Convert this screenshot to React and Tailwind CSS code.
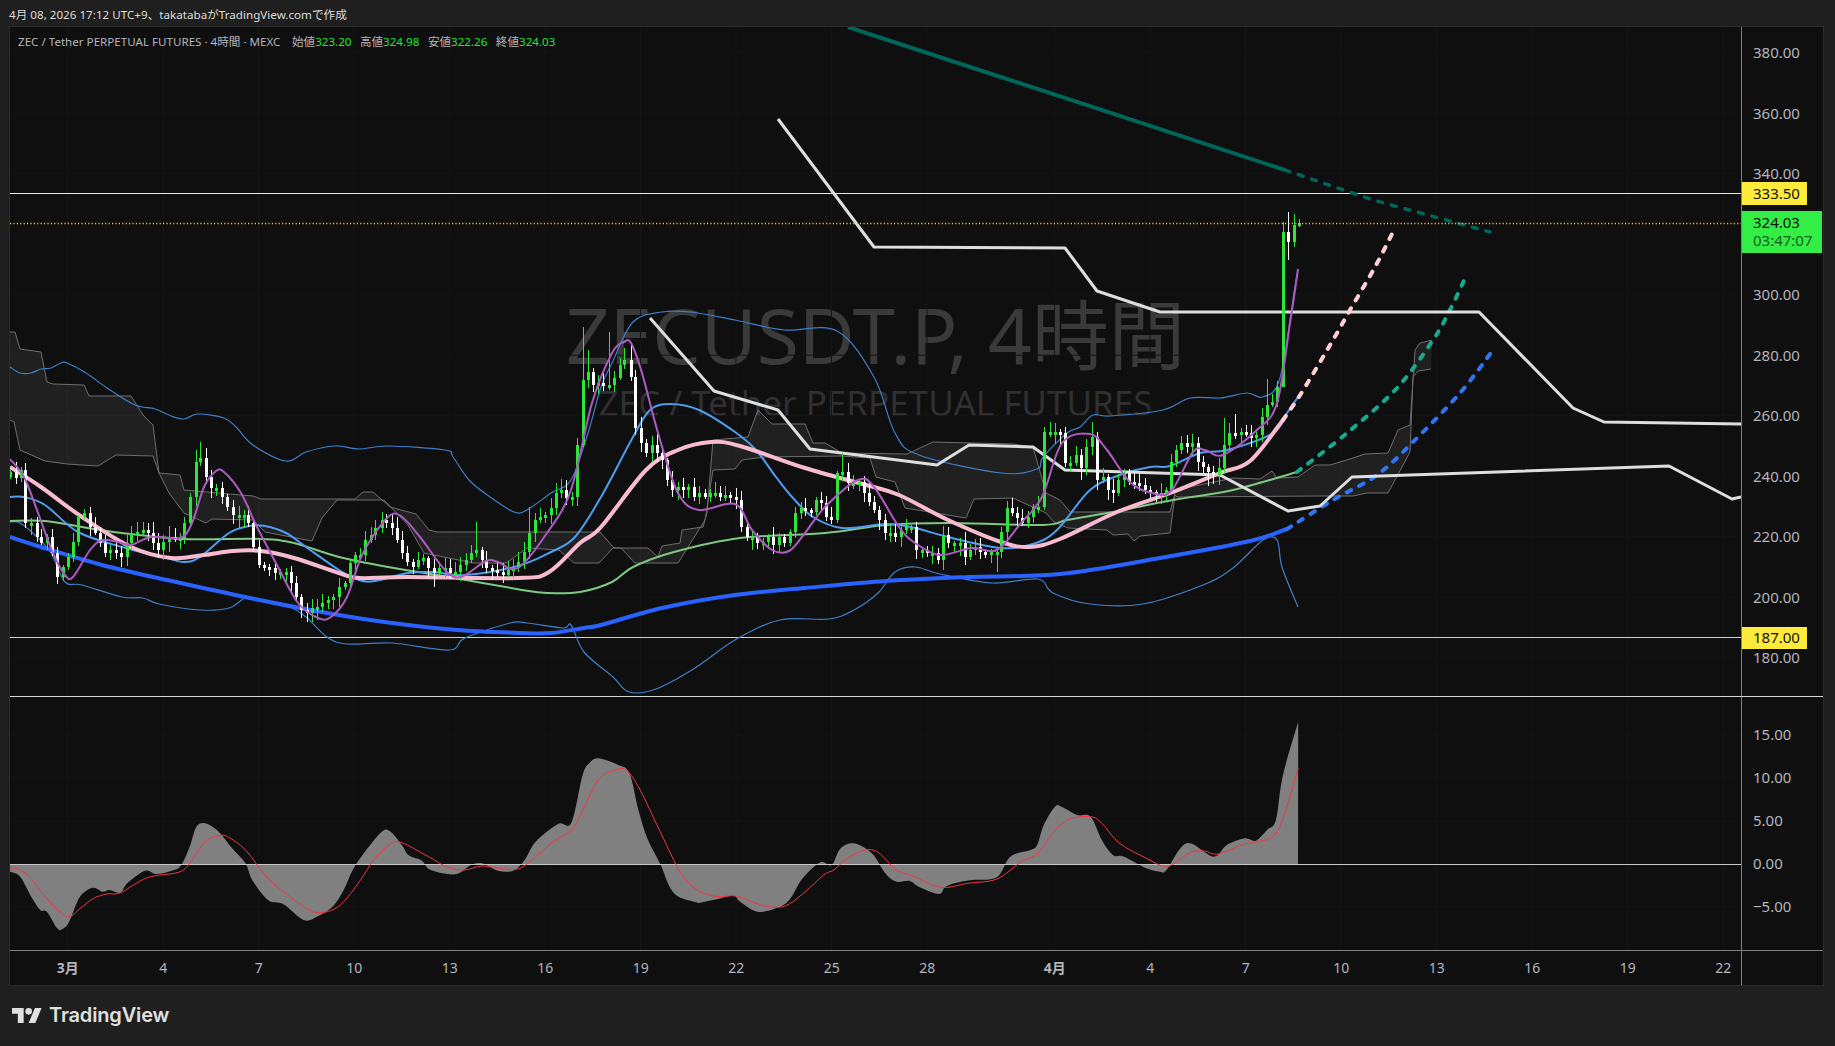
import React from "react";

const parse = (s) => s.trim().split(/\s+/).map((p) => p.split(",").map(Number));

const smooth = (pts) => {
  let d = `M${pts[0][0]},${pts[0][1]}`;
  for (let i = 0; i < pts.length - 1; i++) {
    const p0 = pts[i - 1] || pts[i];
    const p1 = pts[i];
    const p2 = pts[i + 1];
    const p3 = pts[i + 2] || p2;
    const c1x = p1[0] + (p2[0] - p0[0]) / 6;
    const c1y = p1[1] + (p2[1] - p0[1]) / 6;
    const c2x = p2[0] - (p3[0] - p1[0]) / 6;
    const c2y = p2[1] - (p3[1] - p1[1]) / 6;
    d += `C${c1x.toFixed(1)},${c1y.toFixed(1)} ${c2x.toFixed(1)},${c2y.toFixed(1)} ${p2[0].toFixed(1)},${p2[1].toFixed(1)}`;
  }
  return d;
};
const S = (s) => smooth(parse(s));

const blueThick = "10,537 41,547 102,565 167,580 245,597 327,613 392,623 457,630 522,633 551,633 584,628 601,625 662,608 735,595 805,588 886,581 968,577 1060,574 1160,558 1250,541 1287,529";
const blueDash = "1287,529 1333,500 1377,475 1413,442 1460,393 1493,350";
const pink = "10,467 41,487 82,517 131,547 171,558 204,555 233,551 261,551 294,558 339,573 359,578 408,577 518,578 549,572 580,543 601,527 646,470 678,450 711,442 740,446 805,468 866,485 899,495 948,520 1001,542 1030,547 1060,539 1117,512 1173,492 1220,473 1250,461 1283,420";
const pinkDash = "1283,420 1302,392 1333,340 1350,310 1375,267 1393,232";
const blueMid = "10,497 24,497 45,505 78,532 122,547 163,557 184,562 200,557 229,533 249,526 265,526 286,533 306,547 339,570 359,580 375,581 408,573 433,572 465,575 518,566 551,552 575,537 601,497 633,437 650,410 670,404 699,410 735,432 756,450 776,477 793,498 813,517 842,528 886,524 911,527 952,538 1001,548 1033,544 1057,530 1090,490 1120,475 1150,467 1170,466 1200,453 1227,450 1273,433 1287,413 1298,397";
const green = "10,521 45,521 82,527 122,533 184,539 261,539 294,543 339,557 388,567 449,577 522,590 547,593 580,592 612,582 633,567 674,552 740,538 825,533 886,525 948,523 1043,525 1067,520 1113,512 1173,500 1233,490 1297,472";
const tealDash = "1297,472 1347,433 1397,388 1433,340 1450,310 1467,274";
const darkLine = "848,27 1285,170";
const darkDash = "1285,170 1373,200 1490,232";
const whiteA = "778,119 874,247 1065,248 1097,291 1160,312 1479,312 1573,408 1604,422 1741,424";
const whiteB = "650,318 714,391 778,410 810,449 937,465 969,445 1033,447 1065,470 1220,475 1288,511 1320,506 1352,477 1669,466 1732,499 1741,497";
const bbUp = "10,367 20,373 31,373 41,369 51,368 61,363 67,363 86,373 110,390 135,405 155,409 171,416 184,419 198,414 224,418 237,428 253,445 286,461 306,452 335,446 359,449 388,446 445,450 453,457 469,480 490,497 514,512 527,510 551,493 571,480 588,433 601,387 612,363 633,322 662,312 691,312 735,320 784,330 837,331 874,377 895,433 919,455 1001,473 1037,469 1043,457 1067,433 1080,427 1093,415 1110,416 1163,410 1190,398 1220,398 1247,393 1263,397 1280,378 1295,287 1298,270";
const bbLow = "10,522 20,523 37,537 51,553 65,582 82,585 122,597 143,598 159,604 200,610 229,608 245,598 257,599 286,605 306,617 327,637 347,644 392,643 449,650 465,638 510,623 527,623 563,628 571,625 584,652 613,677 629,692 656,689 695,668 735,640 780,620 829,619 854,610 878,593 895,572 915,567 940,574 993,583 1038,579 1053,593 1090,604 1143,604 1203,585 1233,568 1263,540 1277,540 1282,567 1298,607";
const purple = "10,459 24,477 37,510 53,553 65,575 73,577 90,550 102,540 118,542 131,545 151,537 180,538 192,523 204,487 216,471 224,472 241,493 257,527 278,567 298,603 318,618 331,617 347,597 363,553 388,517 402,517 420,537 445,570 461,577 486,561 498,562 518,568 547,533 571,490 592,403 612,353 624,342 631,343 642,373 658,433 678,493 699,510 735,504 752,530 772,550 789,551 805,533 825,507 858,480 874,487 899,527 915,543 940,555 972,548 997,550 1021,523 1042,497 1062,443 1090,434 1107,450 1131,483 1156,494 1172,490 1193,452 1205,450 1223,455 1257,430 1277,403 1290,323 1298,269";
const spanA = "10,332 15,332 20,349 41,352 47,382 53,384 84,385 89,396 131,396 143,415 153,425 159,473 180,475 184,490 253,496 261,499 355,499 363,492 373,492 390,507 416,514 429,530 437,532 600,532 614,548 648,548 658,557 662,546 680,543 682,530 703,527 707,513 713,440 748,437 758,410 772,424 805,424 813,443 825,443 842,453 907,454 933,442 1013,444 1033,447 1046,493 1060,500 1070,512 1170,512 1175,493 1180,489 1233,478 1260,479 1272,471 1277,478 1298,477 1315,465 1330,465 1353,458 1365,454 1388,453 1398,430 1410,425 1415,350 1420,343 1432,340";
const spanB = "10,420 14,422 20,450 45,461 67,464 98,466 116,455 153,456 159,473 169,493 184,513 206,523 212,519 253,520 265,532 312,541 322,518 337,500 384,500 408,525 424,553 473,563 506,563 516,556 527,548 559,550 574,563 599,563 613,548 621,548 635,563 678,563 705,520 713,470 735,469 742,460 764,457 842,456 870,458 876,477 895,482 905,508 966,518 974,499 1013,498 1046,513 1054,522 1068,528 1107,530 1113,535 1128,534 1134,541 1140,536 1170,533 1175,495 1177,497 1320,496 1353,496 1367,493 1388,493 1410,452 1413,377 1418,371 1431,369";
const cloud = [...parse(spanA), ...parse(spanB).reverse()].map((p) => p.join(",")).join(" ");

const track = parse("10,472 16,478 21,470 25,523 31,523 37,537 41,543 47,537 52,553 57,577 63,567 68,557 73,542 78,517 84,513 90,527 95,533 100,543 105,553 110,550 116,553 121,557 127,543 131,533 137,532 143,530 148,533 153,543 158,550 163,542 169,537 175,540 180,538 184,523 190,497 196,462 200,458 206,477 211,488 216,488 222,497 227,507 233,515 239,515 244,515 248,523 253,547 259,565 264,567 269,568 275,573 280,572 286,572 291,583 296,597 301,610 307,613 312,608 317,607 322,603 328,600 333,597 339,587 345,583 350,563 355,555 360,555 365,540 371,535 375,528 382,520 386,523 392,528 397,540 402,553 407,562 413,567 418,560 423,558 428,568 434,573 439,568 445,568 450,573 455,572 460,565 466,560 471,553 476,550 482,560 486,568 492,570 497,572 503,575 508,570 513,568 518,562 524,552 529,533 535,520 540,517 545,515 551,508 556,493 561,490 566,498 572,497 577,445 583,380 588,372 593,385 598,383 603,385 609,385 614,378 620,365 624,360 631,377 635,428 641,443 646,453 652,445 657,453 662,460 667,480 672,490 678,487 683,490 688,487 694,497 699,493 705,497 710,493 715,493 720,497 725,495 730,497 736,500 741,527 747,537 752,537 757,543 763,542 768,537 773,545 779,537 784,543 790,532 795,513 801,508 805,510 811,512 816,500 821,503 826,517 831,520 837,473 842,472 848,483 853,483 859,482 864,493 869,502 874,510 879,520 885,533 890,533 895,537 901,530 906,527 911,527 916,550 922,550 927,553 932,553 938,560 943,535 948,543 954,543 960,543 965,557 970,550 975,547 980,552 985,553 991,552 997,552 1001,532 1007,508 1012,513 1017,518 1022,523 1028,517 1033,507 1038,507 1044,432 1050,432 1055,432 1060,433 1065,463 1070,463 1076,455 1081,468 1086,447 1092,437 1097,480 1103,477 1108,490 1113,493 1118,480 1124,473 1129,482 1134,483 1139,485 1145,490 1150,492 1156,495 1161,493 1166,490 1171,462 1176,450 1181,443 1187,447 1192,443 1198,462 1203,467 1208,472 1213,475 1219,468 1224,445 1229,433 1235,435 1241,432 1246,433 1251,438 1256,435 1262,417 1267,405 1272,402 1277,387 1283,232 1288,242 1294,225 1299,223");

const wickTop = { 196: 450, 200: 442, 476: 522, 529: 507, 550: 477, 561: 479, 583: 327, 588: 350, 609: 332, 624: 348, 631: 345, 842: 453, 955: 527, 1044: 427, 1050: 422, 1092: 422, 1123: 458, 1224: 418, 1235: 414, 1267: 379, 1283: 222, 1288: 212, 1294: 214, 1299: 219 };
const wickBot = { 434: 587, 636: 438, 939: 570, 997: 572, 1081: 480, 1208: 486, 1219: 485, 1288: 260, 1294: 247, 1299: 227, 1283: 384 };

const candles = track.map(([x, y], i) => {
  const prev = i ? track[i - 1][1] : y + 5;
  const up = y <= prev;
  const top = Math.min(prev, y);
  let bot = Math.max(prev, y);
  if (bot - top < 3) bot = top + 3;
  const r1 = Math.abs(Math.sin(i * 12.9898) * 43758.5453) % 1;
  const r2 = Math.abs(Math.sin(i * 78.233) * 12543.853) % 1;
  const wt = wickTop[x] ?? top - 2 - r1 * 9;
  const wb = wickBot[x] ?? bot + 2 + r2 * 8;
  return { x, top, bot, wt, wb, up };
});

const scaleOsc = (s, x0) => parse(s).map(([x, y]) => [x0 + x / 2.24, 700 + y / 3]);
const macd = [
  ...scaleOsc("22,515 45,530 70,590 90,630 105,635 128,685 140,687 155,665 175,600 190,575 210,563 230,575 245,570 270,578 285,550 325,512 350,522 385,512 405,497 425,440 440,380 460,370 490,395 520,445 550,490 565,540 600,600 635,613 680,660 710,650 745,620 770,570 790,510 815,460 855,395 875,395 900,435 915,465 945,482 965,510 1020,523 1055,495 1080,490 1115,512 1150,512 1175,480 1200,425 1250,372 1280,368 1305,225 1320,190 1340,175 1385,195 1410,220 1430,330 1450,415 1480,495 1500,560 1520,590 1560,607", 0),
  ...scaleOsc("0,608 40,597 75,587 90,605 128,635 170,625 200,600 230,535 270,487 295,495 315,445 345,430 385,460 415,520 440,545 470,543 490,560 535,582 550,560 580,547 610,540 665,532 695,470 740,450 755,435 770,375 795,320 810,320 845,345 875,350 900,420 925,465 950,470 1000,505 1030,515 1045,510 1090,430 1150,470 1180,435 1220,415 1245,422 1270,390 1290,360 1305,230 1340,65", 700),
];
const signal = [
  ...scaleOsc("22,503 45,510 70,535 95,580 130,630 155,650 180,625 210,595 240,582 270,578 330,533 400,517 425,490 460,425 490,408 510,410 550,450 600,535 650,590 700,635 740,632 770,605 805,545 840,475 875,432 900,428 960,470 1000,500 1040,510 1080,498 1130,507 1165,505 1200,470 1240,425 1280,390 1300,345 1340,240 1370,215 1400,208 1430,260 1470,370 1515,495 1540,545", 0),
  ...scaleOsc("0,575 40,590 80,588 130,612 170,622 200,612 240,570 280,522 300,510 330,475 370,450 400,458 440,510 480,530 540,562 600,550 665,537 720,485 755,462 790,400 825,358 875,350 900,370 940,430 1000,475 1040,500 1060,492 1100,457 1130,453 1160,462 1220,432 1250,425 1295,390 1340,205", 700),
];
const macdPath = `${smooth(macd)}L1298,864.3L10,864.3L${macd[0][0]},${macd[0][1]}Z`;

const gridX = [];
for (let i = 0; i < 18; i++) gridX.push(i <= 9 ? 67.5 + i * 95.5 : 67.5 + i * 95.5 + 32);
const gridY = [];
for (let i = 0; i < 11; i++) gridY.push(52.7 + i * 60.5);

const prices = ["380.00", "360.00", "340.00", "", "300.00", "280.00", "260.00", "240.00", "220.00", "200.00", "180.00"];
const oscLabels = ["15.00", "10.00", "5.00", "0.00", "−5.00"];
const times = [
  ["3月", true], ["4"], ["7"], ["10"], ["13"], ["16"], ["19"], ["22"], ["25"], ["28"],
  ["4月", true, true], ["4"], ["7"], ["10"], ["13"], ["16"], ["19"], ["22"],
];

const PriceSvg = () => (
  <svg viewBox="10 27 1731 669" width="1731" height="669" className="absolute inset-0" fill="none">
    {gridX.map((x) => <line key={x} x1={x} x2={x} y1="27" y2="696" stroke="#141414" />)}
    {gridY.map((y) => <line key={y} x1="10" x2="1741" y1={y} y2={y} stroke="#141414" />)}
    <polygon points={cloud} fill="#ffffff" fillOpacity="0.075" />
    <polyline points={spanA} stroke="#6e6e6e" strokeWidth="1" />
    <polyline points={spanB} stroke="#6e6e6e" strokeWidth="1" />
    <line x1="10" x2="1741" y1="193.5" y2="193.5" stroke="#fff176" strokeWidth="1" />
    <line x1="10" x2="1741" y1="637.5" y2="637.5" stroke="#fdd835" strokeWidth="1" />
    <path d={S(bbUp)} stroke="#3f7fc8" strokeWidth="1.2" />
    <path d={S(bbLow)} stroke="#3f7fc8" strokeWidth="1.2" />
    <path d={S(blueThick)} stroke="#2962ff" strokeWidth="4" />
    <path d={S(blueDash)} stroke="#2f74f0" strokeWidth="4" strokeDasharray="5 9" strokeLinecap="round" />
    <path d={S(green)} stroke="#81c784" strokeWidth="2" />
    <path d={S(tealDash)} stroke="#1ba890" strokeWidth="4" strokeDasharray="5 9" strokeLinecap="round" />
    <polyline points={darkLine} stroke="#00665a" strokeWidth="4" />
    <polyline points={darkDash} stroke="#00665a" strokeWidth="3.5" strokeDasharray="5 9" strokeLinecap="round" />
    <path d={S(blueMid)} stroke="#4f9cf0" strokeWidth="2" />
    <polyline points={whiteA} stroke="#dedede" strokeWidth="3" strokeLinejoin="round" />
    <polyline points={whiteB} stroke="#dedede" strokeWidth="3" strokeLinejoin="round" />
    <path d={S(pink)} stroke="#f8bbd0" strokeWidth="4" />
    <path d={S(pinkDash)} stroke="#ffcfd2" strokeWidth="4" strokeDasharray="5 9" strokeLinecap="round" />
    <g shapeRendering="crispEdges">
      {candles.map((c, i) => (
        <g key={i} fill={c.up ? "#2ee63a" : "#ffffff"}>
          <rect x={c.x} y={c.wt} width="1" height={c.wb - c.wt} />
          <rect x={c.x - 1} y={c.top} width="3" height={c.bot - c.top} />
        </g>
      ))}
    </g>
    <path d={S(purple)} stroke="#ab5cc0" strokeWidth="2" />
    <line x1="10" x2="1741" y1="223.5" y2="223.5" stroke="#ffb74d" strokeWidth="1.5" strokeDasharray="1.2 2.2" />
  </svg>
);

const OscSvg = () => (
  <svg viewBox="10 697 1731 253" width="1731" height="253" className="absolute inset-0" fill="none">
    {gridX.map((x) => <line key={x} x1={x} x2={x} y1="697" y2="950" stroke="#141414" />)}
    {[735, 778, 821, 907].map((y) => <line key={y} x1="10" x2="1741" y1={y} y2={y} stroke="#141414" />)}
    <path d={macdPath} fill="#808080" />
    <line x1="10" x2="1741" y1="864.5" y2="864.5" stroke="#c8c8c8" strokeWidth="1" />
    <path d={smooth(signal)} stroke="#f23645" strokeWidth="1" />
  </svg>
);

export default function App() {
  return (
    <div className="w-[1835px] h-[1046px] bg-[#1f1f1f] flex flex-col overflow-hidden font-['Noto_Sans','Noto_Sans_CJK_JP',sans-serif]">
      <div className="h-[26px] pl-[9px] pt-[4px] flex items-center text-[11.65px] text-[#dcdcdc] whitespace-nowrap">
        4月 08, 2026 17:12 UTC+9、takatabaがTradingView.comで作成
      </div>

      <div className="ml-[9px] mr-[11px] h-[960px] border border-[#2b2b2b] bg-[#0f0f0f] flex flex-col">
        <div className="flex h-[669px]">
          <div className="relative w-[1731px] h-[669px] overflow-hidden">
            <div className="absolute inset-x-0 top-[260px] flex flex-col items-center text-[#3a3a3a] whitespace-nowrap">
              <div className="text-[76.7px] leading-[94px]">ZECUSDT.P, 4時間</div>
              <div className="text-[35px] leading-[44px] text-[#303030]">ZEC / Tether PERPETUAL FUTURES</div>
            </div>
            <PriceSvg />
            <div className="absolute left-[8px] top-[6px] flex gap-[8.5px] text-[11.6px] leading-[18px] text-[#b2b5be] whitespace-nowrap">
              <span className="mr-[3px]">ZEC / Tether PERPETUAL FUTURES · 4時間 · MEXC</span>
              <span>始値<span className="text-[#22e530]">323.20</span></span>
              <span>高値<span className="text-[#22e530]">324.98</span></span>
              <span>安値<span className="text-[#22e530]">322.26</span></span>
              <span>終値<span className="text-[#22e530]">324.03</span></span>
            </div>
          </div>
          <div className="relative w-[82px] border-l border-[#808080] pt-[16px] text-[15px] leading-[18px] text-[#b2b5be]">
            {prices.map((p, i) => (
              <div key={i} className="h-[60.5px] pl-[11px]">{p}</div>
            ))}
            <div className="absolute left-0 top-[155px] w-[65px] h-[23px] bg-[#ffeb3b] text-[#111] pl-[11px] pb-[2px] flex items-center">333.50</div>
            <div className="absolute left-0 top-[184px] w-[80px] h-[42px] bg-[#33ee44] text-[#111] pl-[11px] pb-[2px] flex flex-col justify-center">
              <span>324.03</span>
              <span className="text-[#14631c]">03:47:07</span>
            </div>
            <div className="absolute left-0 top-[600px] w-[65px] h-[22px] bg-[#ffeb3b] text-[#111] pl-[11px] pb-[2px] flex items-center">187.00</div>
          </div>
        </div>

        <div className="h-px bg-[#d6d6d6] w-[1813px]" />

        <div className="flex h-[253px]">
          <div className="relative w-[1731px] overflow-hidden">
            <OscSvg />
          </div>
          <div className="w-[82px] border-l border-[#808080] pt-[28px] text-[15px] leading-[18px] text-[#b2b5be]">
            {oscLabels.map((p) => (
              <div key={p} className="h-[43px] pl-[11px]">{p}</div>
            ))}
          </div>
        </div>

        <div className="h-px bg-[#808080] w-[1813px]" />

        <div className="flex h-[34px]">
          <div className="w-[1731px] flex items-center text-[14px] text-[#b2b5be] pl-[10px] pb-[2px]">
            {times.map(([t, bold, wide], i) => (
              <div key={i} className={`text-center shrink-0 ${wide ? "ml-[32px]" : ""} ${bold ? "font-bold" : ""} w-[95.5px]`}>{t}</div>
            ))}
          </div>
          <div className="w-[82px] border-l border-[#808080]" />
        </div>
      </div>

      <div className="flex-1 pl-[12px] flex items-center gap-[7px] pb-[2px]">
        <svg viewBox="0 0 36 18" width="30" height="15" fill="#e0e0e0">
          <path d="M14 18H7V7H0V0h14v18zM28 18h-8l7.5-18h8L28 18z" />
          <circle cx="20" cy="4" r="4" />
        </svg>
        <span className="font-['Inter',sans-serif] font-semibold text-[20px] tracking-[-0.15px] text-[#e0e0e0]">TradingView</span>
      </div>
    </div>
  );
}
